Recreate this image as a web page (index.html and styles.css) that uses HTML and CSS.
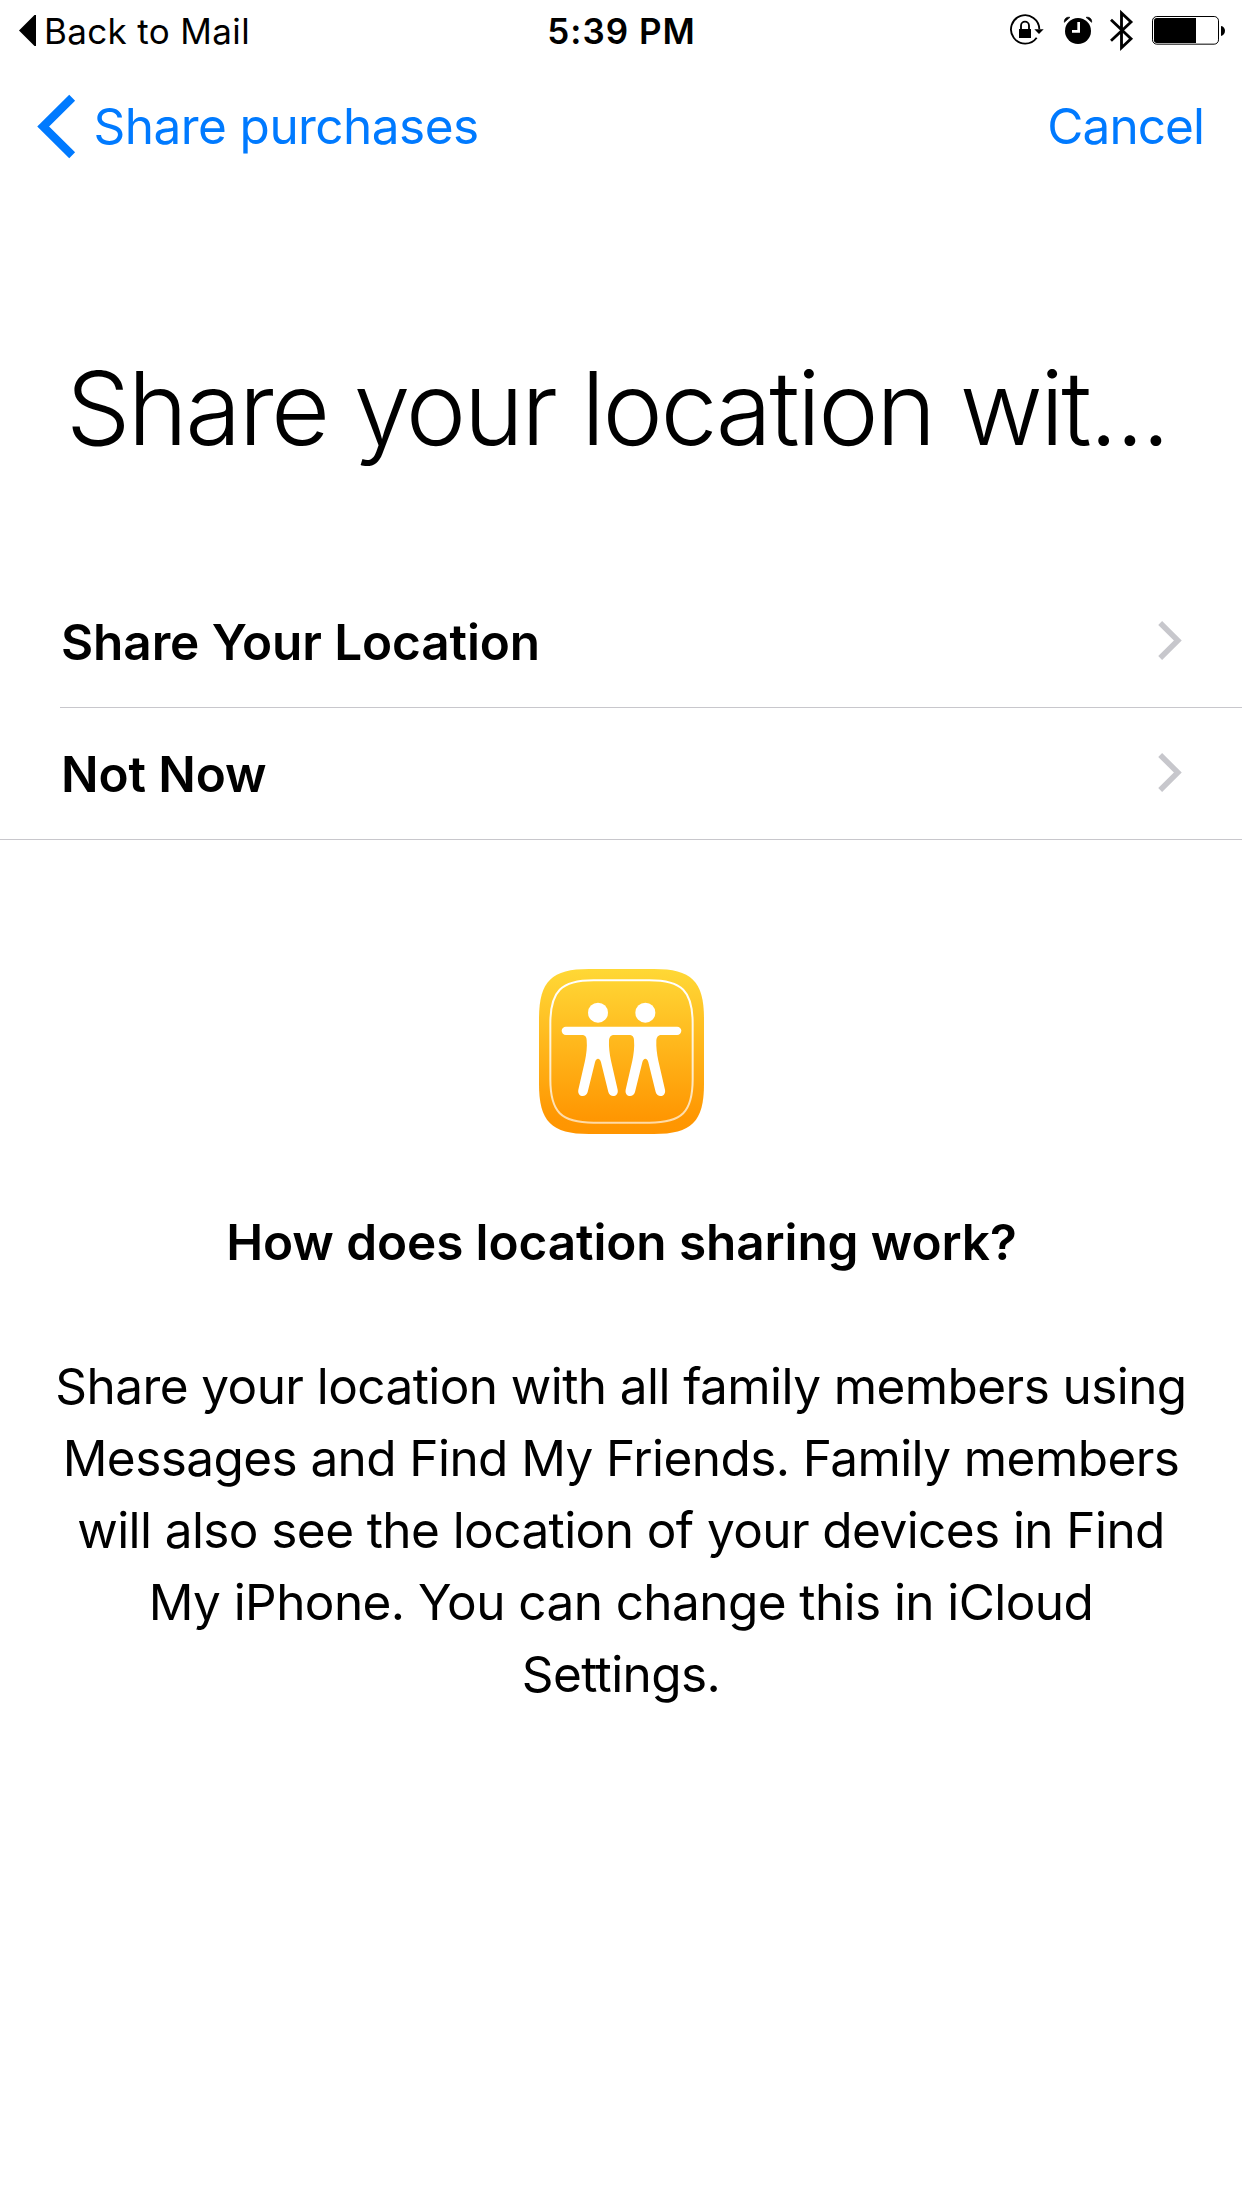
FILE: index.html
```
<!DOCTYPE html>
<html lang="en">
<head>
    <meta charset="UTF-8">
    <meta name="viewport" content="width=device-width, initial-scale=1.0">
    <title>Share your location</title>
    <link rel="stylesheet" href="styles.css">
</head>
<body>
    <div class="status-bar">
        <div class="back-to-app">
            <svg class="back-arrow" viewBox="0 0 17 31"><path d="M17 0V31H15.5L0 15.5 15.5 0Z"/></svg>
            <span>Back to Mail</span>
        </div>
        <div class="time">5:39 PM</div>
        <div class="status-icons">
            <!-- rotation lock -->
            <svg width="35" height="60" viewBox="60 0 105 180">
                <path d="M148 88A42.500 42.500 0 1 0 140 113" fill="none" stroke="#000" stroke-width="5.500"/>
                <path d="M133 88H161L147 102Z"/>
                <path d="M87 87H123V114H87Z"/>
                <path d="M93 88V77A11.500 11.500 0 0 1 117 77V88" fill="none" stroke="#000" stroke-width="5.500"/>
            </svg>
            <!-- alarm -->
            <svg width="27" height="60" viewBox="222 0 81 180">
                <circle cx="264" cy="93" r="39"/>
                <path d="M223 67C222 56 230 50 240 52Z" stroke="#000" stroke-width="2"/>
                <path d="M305 67C306 56 298 50 288 52Z" stroke="#000" stroke-width="2"/>
                <path d="M266 66V94H246" fill="none" stroke="#fff" stroke-width="8"/>
            </svg>
            <!-- bluetooth -->
            <svg width="23" height="60" viewBox="360 0 69 180">
                <path d="M363 59L423 116 394.500 143V39L423 66 363 122" fill="none" stroke="#000" stroke-width="8.500"/>
            </svg>
            <!-- battery -->
            <svg width="73" height="60" viewBox="486 0 219 180">
                <rect x="487.500" y="49.500" width="198" height="83" rx="13" fill="none" stroke="#000" stroke-width="3"/>
                <path d="M500 54H618V129H500Q492 129 492 121V62Q492 54 500 54Z"/>
                <path d="M693 78C709 80 709 105 693 108Z"/>
            </svg>
        </div>
    </div>

    <div class="nav-bar">
        <a class="nav-back">
            <svg width="38" height="63" viewBox="111 285 114 189">
                <path d="M216.500 293.500L129.500 379.500 216.500 465.500" fill="none" stroke="#007aff" stroke-width="25"/>
            </svg>
            <span>Share purchases</span>
        </a>
        <a class="nav-cancel">Cancel</a>
    </div>

    <h1 class="title">Share your location wit...</h1>

    <ul class="options">
        <li class="option">
            <span>Share Your Location</span>
            <svg class="chevron" viewBox="175 63 71 117"><path d="M181 69L234 121.500 181 174"/></svg>
        </li>
        <li class="option">
            <span>Not Now</span>
            <svg class="chevron" viewBox="175 63 71 117"><path d="M181 69L234 121.500 181 174"/></svg>
        </li>
    </ul>

    <div class="info">
        <svg class="app-icon" viewBox="0 0 495 495">
            <defs>
                <linearGradient id="orange" x1="0" y1="0" x2="0" y2="1">
                    <stop offset="0" stop-color="#ffd835"/>
                    <stop offset="0.1" stop-color="#ffd131"/>
                    <stop offset="0.9" stop-color="#ff9702"/>
                    <stop offset="1" stop-color="#ff9500"/>
                </linearGradient>
                <linearGradient id="ring" x1="0" y1="0" x2="0" y2="1">
                    <stop offset="0" stop-color="#fff"/>
                    <stop offset="1" stop-color="#fff" stop-opacity="0.65"/>
                </linearGradient>
                <g id="person">
                    <circle cx="177" cy="131" r="30"/>
                    <path d="M128 197Q143 198 143 213C145 235 142 255 138 275L118 362C114 384 141 388 146 369L168 280C171 266 183 266 186 280L208 369C213 388 240 384 236 362L216 275C212 255 209 235 210 213Q211 198 226 197Z"/>
                </g>
            </defs>
            <path fill="url(#orange)" d="M0 150C0 37 37 0 150 0H345C458 0 495 37 495 150V345C495 458 458 495 345 495H150C37 495 0 458 0 345Z"/>
            <path fill="none" stroke="url(#ring)" stroke-width="6" d="M34 164C34 66 66 34 164 34H331C429 34 461 66 461 164V331C461 429 429 461 331 461H164C66 461 34 429 34 331Z"/>
            <g fill="#fff">
                <rect x="68" y="173" width="359" height="25" rx="12.500"/>
                <use href="#person"/>
                <use href="#person" x="142"/>
            </g>
        </svg>
        <h2 class="info-title">How does location sharing work?</h2>
        <p class="info-text">Share your location with all family members using Messages and Find My Friends. Family members will also see the location of your devices in Find My iPhone. You can change this in iCloud Settings.</p>
    </div>
</body>
</html>
```
FILE: styles.css
```
body {
    font-family: Inter, "Liberation Sans", sans-serif;
    margin: 0;
    padding: 0;
    background-color: #fff;
    color: #000;
    font-size: 49.5px;
}
svg {
    display: block;
    overflow: visible;
    flex-shrink: 0;
}
.status-bar {
    display: grid;
    grid-template-columns: 1fr auto 1fr;
    height: 60px;
    line-height: 60px;
    padding: 0 18px 0 19px;
    font-size: 35px;
}
.back-to-app {
    display: flex;
    align-items: center;
    gap: 8px;
    letter-spacing: 0.35px;
}
.back-arrow {
    width: 17px;
    height: 31px;
}
.time {
    font-weight: 600;
    letter-spacing: 1px;
    padding-top: 1px;
}
.status-icons {
    display: flex;
    justify-content: flex-end;
    gap: 19px;
    margin-right: -1px;
}
.nav-bar {
    display: flex;
    justify-content: space-between;
    align-items: center;
    height: 132px;
    padding: 0 38px 0 37px;
    color: #007aff;
    letter-spacing: -0.55px;
}
.nav-back {
    display: flex;
    align-items: center;
    gap: 18.5px;
}
.nav-cancel {
    letter-spacing: -0.95px;
}
.title {
    margin: 156px 0 108px;
    line-height: 120px;
    font-size: 102px;
    font-weight: 300;
    letter-spacing: -2.6px;
    padding-left: 66px;
    white-space: nowrap;
}
.options {
    list-style: none;
    margin: 0;
    padding: 0;
    font-weight: 600;
}
.option {
    display: flex;
    justify-content: space-between;
    align-items: center;
    box-sizing: border-box;
    height: 132px;
    margin-left: 60px;
    padding: 0 60px 0 1px;
    border-bottom: 1px solid #c8c7cc;
    letter-spacing: -0.1px;
}
.option:last-child {
    margin-left: 0;
    padding-left: 61px;
}
.chevron {
    width: 24px;
    height: 39px;
    margin-bottom: 2px;
}
.chevron path {
    fill: none;
    stroke: #c7c7cc;
    stroke-width: 16.5;
}
.info {
    display: flex;
    flex-direction: column;
    align-items: center;
    gap: 78px;
    padding: 129px 48px 0;
    text-align: center;
}
.app-icon {
    width: 165px;
    height: 165px;
}
.info-title {
    margin: 0;
    padding-left: 1px;
    line-height: 60px;
    font-size: 49.5px;
    font-weight: 600;
    letter-spacing: -0.1px;
}
.info-text {
    margin: 0;
    line-height: 72px;
    letter-spacing: -0.58px;
    font-feature-settings: "calt" 0;
}
```
